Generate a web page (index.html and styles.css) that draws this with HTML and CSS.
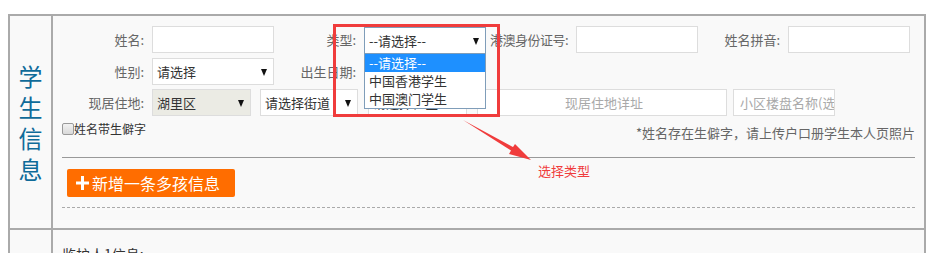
FILE: index.html
```html
<!DOCTYPE html>
<html lang="zh-CN">
<head>
    <meta charset="UTF-8">
    <title>学生信息</title>
    <link rel="stylesheet" href="styles.css">
</head>
<body>
<div class="page">
    <div class="table">
        <div class="row">
            <div class="side"><span class="side-title">学生信息</span></div>
            <div class="main">
                <div class="form-row first">
                    <div class="field"><label>姓名:</label><div class="input"></div></div>
                    <div class="field">
                        <label>类型:</label>
                        <div class="select focus">
                            <span>--请选择--</span><i class="arrow"></i>
                            <ul class="dropdown">
                                <li class="active">--请选择--</li>
                                <li>中国香港学生</li>
                                <li>中国澳门学生</li>
                            </ul>
                        </div>
                    </div>
                    <div class="field"><label class="narrow">港澳身份证号:</label><div class="input"></div></div>
                    <div class="field"><label>姓名拼音:</label><div class="input"></div></div>
                </div>
                <div class="form-row second">
                    <div class="field">
                        <label>性别:</label>
                        <div class="select"><span>请选择</span><i class="arrow"></i></div>
                    </div>
                    <div class="field"><label>出生日期:</label><div class="input"></div></div>
                </div>
                <div class="form-row">
                    <label>现居住地:</label>
                    <div class="select area disabled"><span>湖里区</span><i class="arrow"></i></div>
                    <div class="select street"><span>请选择街道</span><i class="arrow"></i></div>
                    <div class="select community"><span>请选择社区</span><i class="arrow"></i></div>
                    <div class="input address placeholder center">现居住地详址</div>
                    <div class="input estate placeholder">小区楼盘名称(选填)</div>
                </div>
                <div class="extra">
                    <label class="check"><span class="box"></span>姓名带生僻字</label>
                    <span class="note">*姓名存在生僻字，请上传户口册学生本人页照片</span>
                </div>
                <div class="line"></div>
                <button class="add-btn">
                    <svg width="13" height="14" viewBox="0 0 13 14"><path d="M6.5 0V14M0 7H13" stroke="#fff" stroke-width="3"/></svg>新增一条多孩信息
                </button>
                <div class="dash"></div>
            </div>
        </div>
        <div class="row">
            <div class="side"></div>
            <div class="main next">
                <span class="sub-title">监护人1信息:</span>
            </div>
        </div>
    </div>

    <!-- 标注 -->
    <div class="mark-box"></div>
    <svg class="mark-arrow" width="80" height="50" viewBox="0 0 80 50">
        <polygon points="8,5 58,32 60,29 76,45 54,39 56,35.5" fill="#f03c3c"/>
    </svg>
    <span class="mark-text">选择类型</span>
</div>
</body>
</html>
```

FILE: styles.css
```css
*{
    box-sizing: border-box;
    margin: 0;
    padding: 0;
}
body{
    background: #fff;
    font-family: "Noto Sans CJK SC", "Microsoft YaHei", sans-serif;
    font-size: 13px;
    color: #333;
}
.page{
    position: relative;
    width: 939px;
    height: 253px;
    overflow: hidden;
    padding: 14px 0 0 8px;
}
.table{
    width: 918px;
    border: 2px solid #aaa;
    border-bottom: none;
    background: #f9f9f9;
}
.row{
    display: flex;
    border-bottom: 2px solid #aaa;
}
.side{
    width: 43px;
    flex-shrink: 0;
    border-right: 2px solid #aaa;
    display: flex;
    align-items: center;
    justify-content: center;
}
.side-title{
    width: 24px;
    font-size: 24px;
    line-height: 31px;
    color: #0f6b99;
}
.main{
    flex: 1;
    padding: 10px 9px 20px 9px;
}
.form-row{
    display: flex;
    height: 27px;
    margin-bottom: 4px;
}
.form-row.first{
    margin-bottom: 5px;
}
.field{
    display: flex;
    width: 212px;
}
label{
    width: 82px;
    margin-right: 8px;
    text-align: right;
    line-height: 27px;
    color: #666;
    white-space: nowrap;
}
label.narrow{
    letter-spacing: -0.5px;
}
.input, .select{
    position: relative;
    height: 27px;
    width: 122px;
    background: #fff;
    border: 1px solid #ddd;
    line-height: 25px;
    padding-left: 4px;
    white-space: nowrap;
    overflow: hidden;
}
.select{
    overflow: visible;
}
.select span{
    display: block;
    overflow: hidden;
    margin-right: 16px;
}
.select.focus{
    border-color: #7f9db9;
    margin-top: 1px;
    z-index: 2;
}
.arrow{
    position: absolute;
    right: 6px;
    top: 10px;
    border-left: 3.5px solid transparent;
    border-right: 3.5px solid transparent;
    border-top: 7px solid #111;
}
.dropdown{
    position: absolute;
    top: 25px;
    left: -1px;
    width: 122px;
    background: #fff;
    border: 1px solid #7f9db9;
    list-style: none;
}
.dropdown li{
    height: 18px;
    line-height: 18px;
    padding-left: 4px;
}
.dropdown li.active{
    background: #1e90ff;
    color: #fff;
}
.select.area{
    width: 99px;
    margin-right: 9px;
}
.select.disabled{
    background: #ebebe4;
}
.select.street{
    width: 98px;
    margin-right: 10px;
}
.select.community{
    width: 99px;
    margin-right: 10px;
}
.input.address{
    width: 250px;
    margin-right: 6px;
}
.input.estate{
    width: 102px;
    padding-left: 6px;
}
.placeholder{
    color: #a9a9a9;
}
.center{
    text-align: center;
}
.extra{
    display: flex;
    justify-content: space-between;
    margin-top: 6px;
    height: 18px;
}
.check{
    width: auto;
    margin: 0;
    display: flex;
    align-items: center;
    height: 14px;
    line-height: 14px;
    font-size: 12px;
    color: #333;
}
.box{
    width: 12px;
    height: 12px;
    border: 1px solid #999;
    border-radius: 2px;
    background: linear-gradient(#f2f2f2, #d9d9d9);
}
.note{
    padding-top: 2px;
    color: #666;
    font-size: 13px;
    line-height: 18px;
}
.line{
    margin-top: 17px;
    height: 1px;
    background: #999;
}
.add-btn{
    display: flex;
    align-items: center;
    gap: 3px;
    margin: 11px 0 0 5px;
    height: 28px;
    width: 168px;
    padding-left: 9px;
    border: none;
    border-radius: 2px;
    background: #ff6d00;
    color: #fff;
    font-family: inherit;
    font-size: 16px;
}
.dash{
    margin-top: 10px;
    border-top: 1px dashed #aaa;
}
.main.next{
    padding-top: 14px;
}
.sub-title{
    font-size: 14px;
    line-height: 20px;
    color: #333;
}
.mark-box{
    position: absolute;
    left: 333px;
    top: 24px;
    width: 167px;
    height: 93px;
    border: 3px solid #f03c3c;
    z-index: 3;
}
.mark-arrow{
    position: absolute;
    left: 455px;
    top: 115px;
}
.mark-text{
    position: absolute;
    left: 538px;
    top: 161px;
    font-size: 13px;
    color: #f03c3c;
}
```
